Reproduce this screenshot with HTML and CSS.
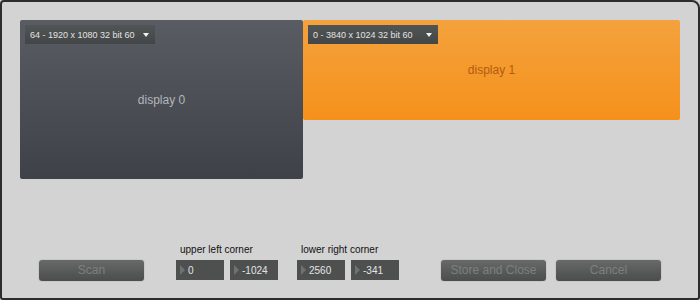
FILE: index.html
```html
<!DOCTYPE html>
<html>
<head>
<meta charset="utf-8">
<link rel="stylesheet" href="styles.css">
</head>
<body>
<div class="frame">
  <div class="displays">
    <div class="display display-0">
      <div class="dropdown"><span>64 - 1920 x 1080 32 bit 60</span><i class="caret"></i></div>
      <div class="display-name">display 0</div>
    </div>
    <div class="display display-1">
      <div class="dropdown"><span>0 - 3840 x 1024 32 bit 60</span><i class="caret"></i></div>
      <div class="display-name">display 1</div>
    </div>
  </div>
  <div class="controls">
    <button class="btn btn-scan">Scan</button>
    <div class="group group-ul">
      <div class="group-label">upper left corner</div>
      <div class="fields">
        <div class="field"><i class="arrow"></i><span>0</span></div>
        <div class="field"><i class="arrow"></i><span>-1024</span></div>
      </div>
    </div>
    <div class="group group-lr">
      <div class="group-label">lower right corner</div>
      <div class="fields">
        <div class="field"><i class="arrow"></i><span>2560</span></div>
        <div class="field"><i class="arrow"></i><span>-341</span></div>
      </div>
    </div>
    <button class="btn btn-store">Store and Close</button>
    <button class="btn btn-cancel">Cancel</button>
  </div>
</div>
</body>
</html>
```
FILE: styles.css
```css
html, body {
  margin: 0;
  padding: 0;
  background: #d3d3d3;
}
.frame {
  box-sizing: border-box;
  width: 700px;
  height: 300px;
  border: 2px solid #2c2c2c;
  border-radius: 4px 8px 3px 3px;
  background: #d3d3d3;
  display: flex;
  flex-direction: column;
  padding: 18px 18px 17px 18px;
  font-family: "Liberation Sans", Arial, sans-serif;
}
.displays {
  display: flex;
  align-items: flex-start;
}
.display {
  display: grid;
  border-radius: 2px;
}
.display > * {
  grid-area: 1 / 1;
}
.display-0 {
  width: 283px;
  height: 159px;
  background: linear-gradient(#595c62, #3e4148);
}
.display-1 {
  width: 377px;
  height: 100px;
  background: linear-gradient(#f4a23d, #f5911b);
}
.dropdown {
  justify-self: start;
  align-self: start;
  margin: 5px 0 0 5px;
  width: 130px;
  height: 19px;
  box-sizing: border-box;
  padding: 0 6px 0 5px;
  display: flex;
  align-items: center;
  justify-content: space-between;
  background: linear-gradient(#525556, #434647);
  color: #e2e2e2;
  font-size: 9px;
}
.caret {
  width: 0;
  height: 0;
  border-left: 3.5px solid transparent;
  border-right: 3.5px solid transparent;
  border-top: 4px solid #f2f2f2;
  margin-top: 1px;
}
.display-name {
  place-self: center;
  font-size: 12px;
}
.display-0 .display-name {
  color: #b3b6bb;
}
.display-1 .display-name {
  color: #b35b12;
}
.controls {
  margin-top: auto;
  display: flex;
  align-items: flex-end;
  padding-left: 19px;
}
.btn {
  width: 105px;
  height: 21px;
  padding: 0;
  border: none;
  border-radius: 3px;
  background: linear-gradient(#686a6a, #4b4d4d);
  color: #7d7f7f;
  font-family: "Liberation Sans", Arial, sans-serif;
  font-size: 12px;
  line-height: 21px;
  box-shadow: 0 0 0 1px rgba(0,0,0,0.05);
}
.group-ul { margin-left: 32px; }
.group-lr { margin-left: 19px; }
.btn-store { margin-left: 42px; }
.btn-cancel { margin-left: 10px; }
.group-label {
  font-size: 10px;
  line-height: 12px;
  color: #111;
  padding-left: 4px;
  margin-bottom: 4px;
}
.fields {
  display: flex;
  gap: 6px;
  margin-bottom: 1px;
}
.field {
  width: 48px;
  height: 20px;
  box-sizing: border-box;
  background: #4e5050;
  display: flex;
  align-items: center;
  padding-left: 4px;
  color: #e4e4e4;
  font-size: 10px;
}
.arrow {
  width: 0;
  height: 0;
  border-top: 5.5px solid transparent;
  border-bottom: 5.5px solid transparent;
  border-left: 5px solid #707272;
  margin-right: 3px;
}
```
